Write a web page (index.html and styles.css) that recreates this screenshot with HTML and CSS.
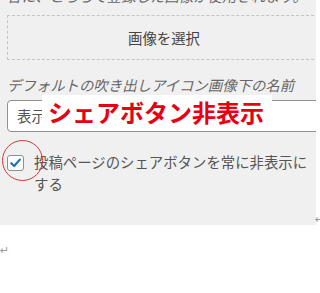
FILE: index.html
```html
<!DOCTYPE html>
<html lang="ja">
<head>
<meta charset="utf-8">
<link rel="stylesheet" href="styles.css">
</head>
<body>
<div class="page">
  <div class="panel">
    <p class="desc">合に、こちらで登録した画像が使用されます。</p>
    <div class="pick">画像を選択</div>
    <p class="label">デフォルトの吹き出しアイコン画像下の名前</p>
    <div class="input">表示</div>
    <div class="check-row">
      <span class="checkbox">
        <svg width="16" height="16" viewBox="0 0 16 16"><path d="M3.5 8.2 L6.6 11.2 L12.6 4.4" fill="none" stroke="#2271b1" stroke-width="2.4" stroke-linecap="round" stroke-linejoin="round"/></svg>
      </span>
      <span class="check-text">投稿ページのシェアボタンを常に非表示にする</span>
    </div>
    <span class="circle"></span>
    <div class="note">シェアボタン非表示</div>
  </div>
  <span class="ret ret-a">↵</span>
  <div class="after"><span class="ret">↵</span></div>
</div>
</body>
</html>
```
FILE: styles.css
```css
html, body {
  margin: 0;
  padding: 0;
  background: #fff;
}
.page {
  position: relative;
  width: 320px;
  height: 293px;
  overflow: hidden;
  font-family: "Noto Sans CJK JP", "Noto Sans", sans-serif;
}
.panel {
  position: relative;
  width: 309px;
  height: 225px;
  padding-left: 7px;
  background: #f0f0f0;
  overflow: hidden;
}
.desc {
  margin: -15px 0 0 0;
  height: 22px;
  line-height: 22px;
  font-size: 14.4px;
  font-style: italic;
  color: #666;
  white-space: nowrap;
}
.pick {
  margin-top: 8px;
  width: 330px;
  height: 43px;
  border: 1px dashed #c4c4c4;
  display: flex;
  align-items: center;
  justify-content: center;
  font-size: 14.4px;
  color: #444;
  text-indent: -18px;
}
.label {
  margin: 14px 0 0 0;
  height: 22px;
  line-height: 22px;
  font-size: 14.4px;
  font-style: italic;
  color: #666;
  white-space: nowrap;
}
.input {
  margin-top: 4px;
  width: 330px;
  height: 30px;
  border: 1px solid #8c8f94;
  border-radius: 4px;
  background: #fff;
  padding-left: 9px;
  line-height: 30px;
  font-size: 14.4px;
  color: #555;
}
.check-row {
  display: flex;
  align-items: flex-start;
  gap: 10px;
  margin-top: 21px;
}
.checkbox {
  flex: none;
  width: 15px;
  height: 14px;
  margin-top: 2px;
  border: 1px solid #8c8f94;
  border-radius: 3px;
  background: #fff;
  display: flex;
  align-items: center;
  justify-content: center;
}
.checkbox svg {
  display: block;
}
.check-text {
  width: 276px;
  font-size: 14.4px;
  line-height: 22px;
  color: #555;
  margin-top: -2px;
}
.circle {
  position: absolute;
  left: 2px;
  top: 140px;
  width: 41px;
  height: 41px;
  border: 1px solid #d9343a;
  border-radius: 50%;
  box-sizing: border-box;
}
.note {
  position: absolute;
  left: 42px;
  top: 95px;
  width: 230px;
  height: 33px;
  background: #fff;
  color: #e60012;
  font-weight: 700;
  font-size: 24px;
  line-height: 33px;
  padding-left: 6px;
  box-sizing: border-box;
  white-space: nowrap;
}
.ret {
  font-family: "DejaVu Sans", sans-serif;
  font-size: 11px;
  color: #999;
  line-height: 12px;
}
.ret-a {
  position: absolute;
  left: 315px;
  top: 214px;
}
.after {
  padding-top: 18px;
  font-size: 11px;
  line-height: 12px;
  height: 12px;
}
```
